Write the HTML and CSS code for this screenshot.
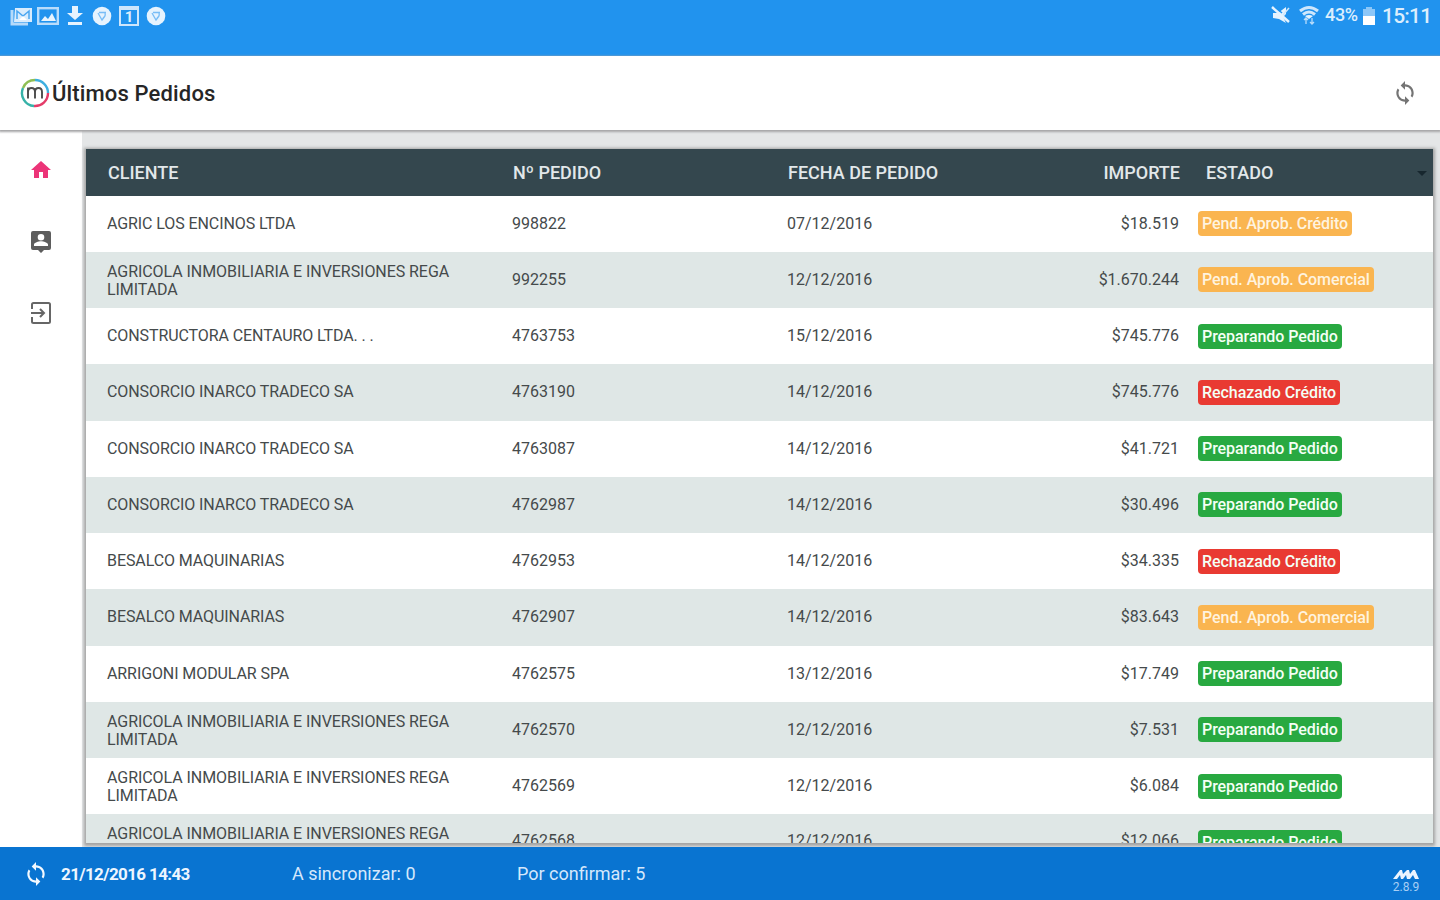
FILE: index.html
```html
<!DOCTYPE html>
<html lang="es">
<head>
<meta charset="utf-8">
<title>Últimos Pedidos</title>
<link rel="stylesheet" href="styles.css">
</head>
<body>
<div class="app">
  <div class="status">
    <div class="notifications">
      <svg width="24" height="22" viewBox="0 0 24 22"><path d="M3 5v14h16" fill="none" stroke="#b5dafa" stroke-width="3"/><path d="M6 3h17v14H5z" fill="#d9ecfd"/><path d="M8 14V6l6 5 6-5v8" fill="none" stroke="#4aa6f1" stroke-width="1.500"/><path d="M10 15l4-4 4 4z" fill="#fff"/></svg>
      <svg width="22" height="20" viewBox="0 0 22 20"><rect x="1.200" y="2.200" width="19.600" height="15.600" fill="none" stroke="#b9dcfb" stroke-width="2.400"/><path d="M4 15l4-5 3 3 4-6 4 8z" fill="#e6f3fe"/></svg>
      <svg width="16" height="21" viewBox="0 0 16 21"><path d="M5 1h6v7h5l-8 7-8-7h5zM1 17h14v3H1z" fill="#e6f3fe"/></svg>
      <svg width="20" height="20" viewBox="0 0 20 20"><circle cx="10" cy="10" r="9.300" fill="#e6f3fe"/><path d="M6 7l4 7 3-4M7 6.500h7M13 7q1 3-2 5" fill="none" stroke="#79bdf6" stroke-width="1.300"/></svg>
      <span class="calendar">1</span>
      <svg width="20" height="20" viewBox="0 0 20 20"><circle cx="10" cy="10" r="9.300" fill="#e6f3fe"/><path d="M6 7l4 7 3-4M7 6.500h7M13 7q1 3-2 5" fill="none" stroke="#79bdf6" stroke-width="1.300"/></svg>
    </div>
    <div class="device">
      <svg class="mute" width="20" height="20" viewBox="0 0 20 20"><path d="M2 8h5l8-6v7l-3 3 3 6-7-4-6-1z" fill="#e6f3fe"/><path d="M1 2l17 15" stroke="#e6f3fe" stroke-width="2.500"/><path d="M4 2l7 6" stroke="#2193ee" stroke-width="1.500"/><path d="M12 10l6-7" stroke="#cfe7fc" stroke-width="1.500"/></svg>
      <svg class="wifi" width="20" height="20" viewBox="0 0 20 20"><path d="M1 6Q10-1 19 6M4 9.500q6-5 12 0" fill="none" stroke="#cfe7fc" stroke-width="3"/><path d="M6 11q4-2 8 0l-4 3z" fill="#e6f3fe"/><path d="M7 19v-6m-2 2l2-2 2 2M13 13v6m-2-2l2 2 2-2" fill="none" stroke="#b9dcfa" stroke-width="1.300"/></svg>
      <span class="percent">43%</span>
      <svg class="battery" width="12" height="18" viewBox="0 0 12 18"><path d="M3 0h6v2h3v7H0V2h3z" fill="#8cc7f8"/><path d="M0 9h12v9H0z" fill="#fff"/></svg>
      <span class="clock">15:11</span>
    </div>
  </div>
  <header class="toolbar">
    <div class="brand">
      <svg width="30" height="30" viewBox="0 0 30 30"><g fill="none" stroke-width="2.400"><path d="M3 10A13 13 0 0 1 15 2" stroke="#8fbf55"/><path d="M15 2A13 13 0 0 1 28 15" stroke="#3eafe0"/><path d="M28 15A13 13 0 0 1 14 28" stroke="#e43c69"/><path d="M14 28A13 13 0 0 1 3 10" stroke="#36b2a8"/><path d="M8 20.500v-11M8 14q0-4 3.500-4t3.500 4v6.500M15 14q0-4 3.500-4t3.500 4v6.500" stroke="#4b4b4b" stroke-width="1.900"/></g></svg>
      <h1>Últimos Pedidos</h1>
    </div>
    <svg class="refresh" width="26" height="26" viewBox="0 0 24 24"><path d="M12 4V1L8 5l4 4V6c3.310 0 6 2.690 6 6 0 1.010-.25 1.970-.7 2.800l1.460 1.460C19.540 15.030 20 13.570 20 12c0-4.420-3.580-8-8-8zm0 14c-3.310 0-6-2.690-6-6 0-1.010.25-1.970.7-2.800L5.240 7.740C4.460 8.970 4 10.430 4 12c0 4.420 3.580 8 8 8v3l4-4-4-4v3z" fill="#747474"/></svg>
  </header>
  <div class="body">
    <nav class="side">
      <svg width="24" height="24" viewBox="0 0 24 24"><path d="M10 20v-6h4v6h5v-8h3L12 3 2 12h3v8z" fill="#ec3478"/></svg>
      <svg width="24" height="24" viewBox="0 0 24 24"><path d="M20 1H4a2 2 0 0 0-2 2v15a2 2 0 0 0 2 2h5l3 3 3-3h5a2 2 0 0 0 2-2V3a2 2 0 0 0-2-2zM12 4a3.300 3.300 0 1 1 0 6.600A3.300 3.300 0 0 1 12 4zm7 12H5v-1.500c0-2 4.500-3.300 7-3.300s7 1.300 7 3.300z" fill="#5d5d5d"/></svg>
      <svg width="24" height="24" viewBox="0 0 24 24"><path d="M3 8V3.500A1.500 1.500 0 0 1 4.500 2h15A1.500 1.500 0 0 1 21 3.500v17a1.500 1.500 0 0 1-1.500 1.500h-15A1.500 1.500 0 0 1 3 20.500V16M2 12h13M11 8l4 4-4 4" fill="none" stroke="#666" stroke-width="2"/></svg>
    </nav>
    <main class="content">
      <div class="table">
        <div class="row head"><span>CLIENTE</span><span>Nº PEDIDO</span><span>FECHA DE PEDIDO</span><span class="amount">IMPORTE</span><span class="state">ESTADO<i class="caret"></i></span></div>
        <div class="row"><span class="client">AGRIC LOS ENCINOS LTDA</span><span>998822</span><span>07/12/2016</span><span class="amount">$18.519</span><span><b class="badge orange credit">Pend. Aprob. Crédito</b></span></div>
        <div class="row"><span class="client double">AGRICOLA INMOBILIARIA E INVERSIONES REGA<br>LIMITADA</span><span>992255</span><span>12/12/2016</span><span class="amount">$1.670.244</span><span><b class="badge orange">Pend. Aprob. Comercial</b></span></div>
        <div class="row"><span class="client">CONSTRUCTORA CENTAURO LTDA. . .</span><span>4763753</span><span>15/12/2016</span><span class="amount">$745.776</span><span><b class="badge green">Preparando Pedido</b></span></div>
        <div class="row"><span class="client">CONSORCIO INARCO TRADECO SA</span><span>4763190</span><span>14/12/2016</span><span class="amount">$745.776</span><span><b class="badge red">Rechazado Crédito</b></span></div>
        <div class="row"><span class="client">CONSORCIO INARCO TRADECO SA</span><span>4763087</span><span>14/12/2016</span><span class="amount">$41.721</span><span><b class="badge green">Preparando Pedido</b></span></div>
        <div class="row"><span class="client">CONSORCIO INARCO TRADECO SA</span><span>4762987</span><span>14/12/2016</span><span class="amount">$30.496</span><span><b class="badge green">Preparando Pedido</b></span></div>
        <div class="row"><span class="client">BESALCO MAQUINARIAS</span><span>4762953</span><span>14/12/2016</span><span class="amount">$34.335</span><span><b class="badge red">Rechazado Crédito</b></span></div>
        <div class="row"><span class="client">BESALCO MAQUINARIAS</span><span>4762907</span><span>14/12/2016</span><span class="amount">$83.643</span><span><b class="badge orange">Pend. Aprob. Comercial</b></span></div>
        <div class="row"><span class="client">ARRIGONI MODULAR SPA</span><span>4762575</span><span>13/12/2016</span><span class="amount">$17.749</span><span><b class="badge green">Preparando Pedido</b></span></div>
        <div class="row"><span class="client double">AGRICOLA INMOBILIARIA E INVERSIONES REGA<br>LIMITADA</span><span>4762570</span><span>12/12/2016</span><span class="amount">$7.531</span><span><b class="badge green">Preparando Pedido</b></span></div>
        <div class="row"><span class="client double">AGRICOLA INMOBILIARIA E INVERSIONES REGA<br>LIMITADA</span><span>4762569</span><span>12/12/2016</span><span class="amount">$6.084</span><span><b class="badge green">Preparando Pedido</b></span></div>
        <div class="row last"><span class="client">AGRICOLA INMOBILIARIA E INVERSIONES REGA</span><span>4762568</span><span>12/12/2016</span><span class="amount">$12.066</span><span><b class="badge green">Preparando Pedido</b></span></div>
      </div>
    </main>
  </div>
  <footer class="footer">
    <svg width="26" height="26" viewBox="0 0 24 24"><path d="M12 4V1L8 5l4 4V6c3.310 0 6 2.690 6 6 0 1.010-.25 1.970-.7 2.800l1.460 1.460C19.540 15.030 20 13.570 20 12c0-4.420-3.580-8-8-8zm0 14c-3.310 0-6-2.690-6-6 0-1.010.25-1.970.7-2.800L5.240 7.740C4.460 8.970 4 10.430 4 12c0 4.420 3.580 8 8 8v3l4-4-4-4v3z" fill="#f3f9ff"/></svg>
    <span class="synced">21/12/2016 14:43</span>
    <span class="pending">A sincronizar: 0</span>
    <span class="confirm">Por confirmar: 5</span>
    <div class="version">
      <svg width="28" height="12" viewBox="0 0 28 12"><path d="M1 11L8 2h2l1 4 4-4h2l1 4 3-4h2l4 9h-4l-2-4-3 4h-3l-1-4-3 4H9L8 7l-3 4z" fill="#eaf4ff"/></svg>
      <span>2.8.9</span>
    </div>
  </footer>
</div>
</body>
</html>
```
FILE: styles.css
```css
* { box-sizing: border-box; }
body { margin: 0; font-family: Roboto, "Liberation Sans", sans-serif; }
svg { display: block; flex: none; }
.app { width: 1440px; height: 900px; display: flex; flex-direction: column; overflow: hidden; background: #fff; }

.status { height: 56px; flex: none; display: flex; justify-content: space-between; background: #2193ee; padding: 0 9px; color: #dceefd; }
.notifications, .device { display: flex; align-items: center; height: 31px; }
.notifications { gap: 7px; }
.notifications svg:first-child { margin-right: -3px; }
.notifications svg:nth-child(2) { margin-right: 1px; }
.notifications svg:nth-child(3) { margin-right: 2px; }
.calendar { width: 20px; height: 20px; border: 2px solid #cde6fc; border-top-width: 4px; font: 700 15px/15px Roboto, sans-serif; text-align: center; }
.wifi { margin: 0 6px 2px 8px; }
.mute { margin-bottom: 2px; }
.percent { font-size: 18px; font-weight: 500; letter-spacing: -.3px; width: 34px; margin-bottom: 2px; }
.battery { margin: 0 7px 0 4px; }
.clock { font-size: 21px; letter-spacing: -.8px; width: 49px; font-weight: 500; padding-top: 1px; }

.toolbar { height: 74px; flex: none; display: flex; align-items: center; justify-content: space-between; padding: 0 22px 0 20px; background: #fff; position: relative; z-index: 1; box-shadow: 0 1px 2px 1px #a6a6a8; }
.brand { display: flex; align-items: center; gap: 2px; }
.brand h1 { margin: 2px 0 0; font-size: 22px; font-weight: 500; line-height: 28px; color: #262626; letter-spacing: .15px; }

.body { flex: 1; min-height: 0; display: flex; }
.side { width: 82px; flex: none; padding: 28px 0 0 29px; display: flex; flex-direction: column; gap: 47.5px; background: #fff; }
.content { flex: 1; min-width: 0; padding: 19px 7px 4px 4px; background: #e4e6e7; }
.table { height: 100%; overflow: hidden; background: #fff; box-shadow: 0 1px 3px 2px #a3a3a3; }
.row { height: 56.25px; display: grid; grid-template-columns: 405px 275px 210px 182px 1fr; padding-left: 21px; align-items: center; font-size: 16px; line-height: 18px; color: #454a4b; white-space: nowrap; }
.row:nth-child(odd) { background: #dfe7e6; }
.row.head { height: 46.5px; padding: 2px 0 0 22px; background: #34474e; color: #e2e8ea; font-size: 18px; font-weight: 500; }
.client { letter-spacing: -.09px; }
.double { letter-spacing: -.06px; padding-top: 2px; }
.row.last { height: 29px; align-items: start; }
.last .client { padding-top: 11px; letter-spacing: -.06px; }
.last span { padding-top: 18px; }
.last span:last-child { padding-top: 16px; }
.amount { text-align: right; }
.row .amount + span { padding-left: 19px; }
.row.head .state { padding: 0 6px 0 26px; display: flex; justify-content: space-between; align-items: center; }
.caret { border: 5px solid transparent; border-top-color: #17272e; border-bottom: 0; }
.badge { display: block; width: fit-content; height: 25px; line-height: 25px; padding: 0 4px; border-radius: 4px; font-size: 16px; font-weight: 500; letter-spacing: -.06px; color: #f4fff5; }
.green { background: #28a941; }
.red { background: #e93a32; }
.orange { background: #fab550; color: #fff3df; }
.credit { letter-spacing: -.12px; }

.footer { height: 53px; flex: none; display: flex; align-items: center; padding: 0 20px 0 23px; background: #0974d1; color: #d5e8fc; font-size: 18px; position: relative; z-index: 1; }
.synced { width: 231px; margin-left: 12px; font-size: 17px; font-weight: 700; letter-spacing: -.62px; color: #edf6ff; }
.pending { width: 225px; }
.version { margin: 14px 0 0 auto; display: flex; flex-direction: column; align-items: center; font-size: 12px; line-height: 14px; color: #a8cff5; }
```
